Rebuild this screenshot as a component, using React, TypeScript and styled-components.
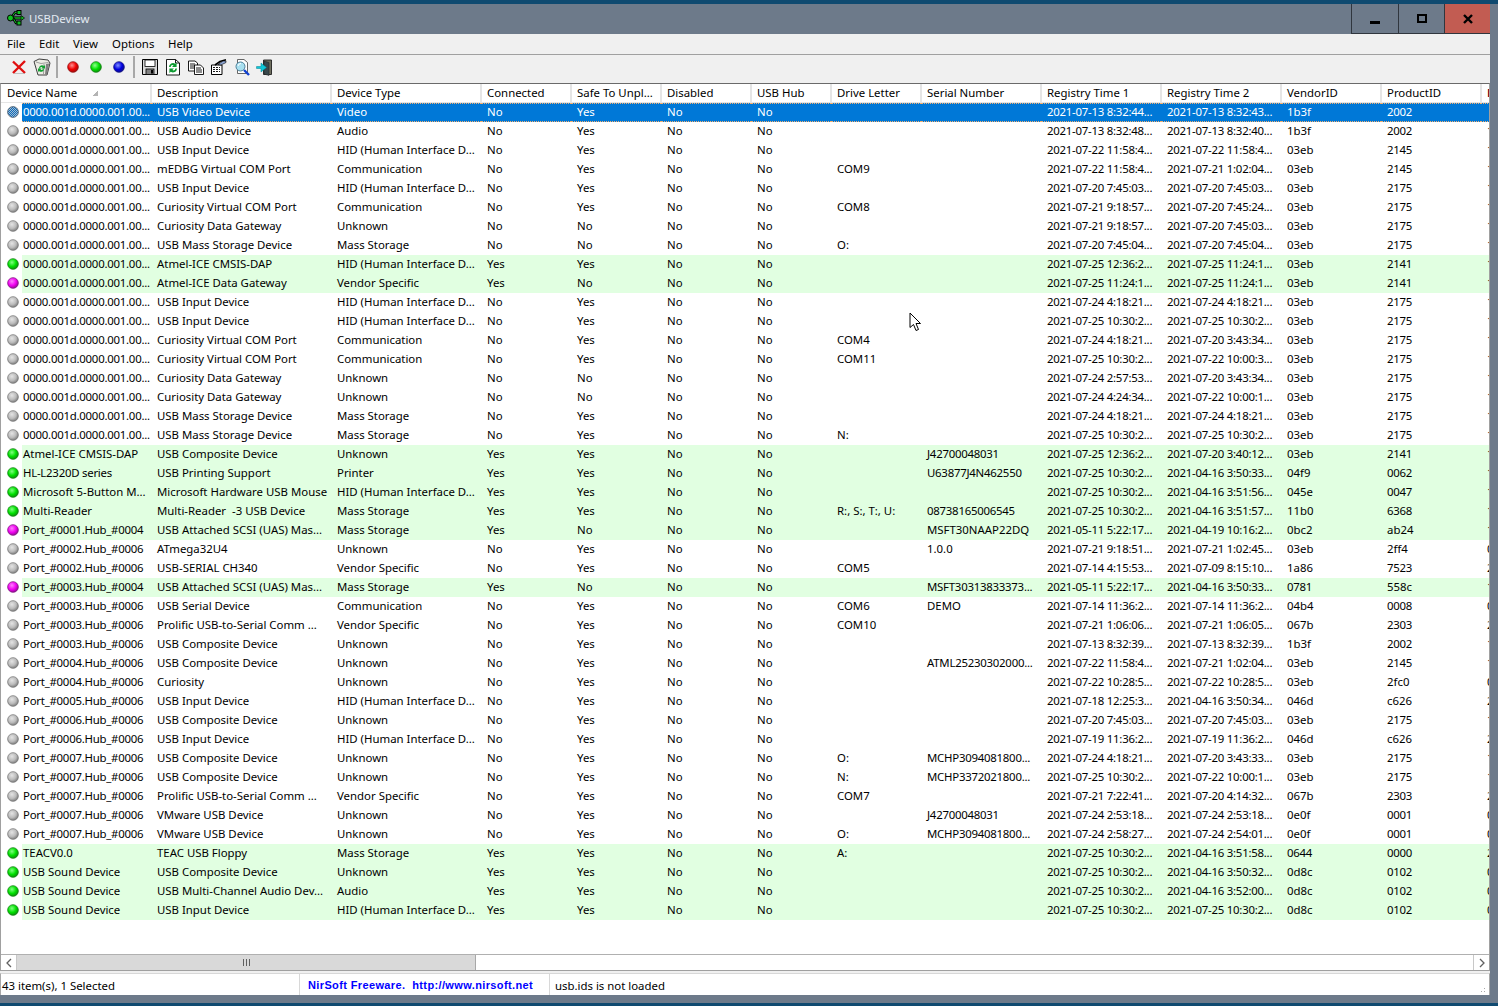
import React from "react";
import styled, { createGlobalStyle } from "styled-components";

const FONT = `"Noto Sans", "Open Sans", Tahoma, sans-serif`;
const COLS = "150px 180px 150px 90px 90px 90px 80px 90px 120px 120px 120px 100px 100px 9px";

const Global = createGlobalStyle`
  html, body { margin: 0; padding: 0; height: 100%; overflow: hidden; background: #0f4a70; }
  * { box-sizing: border-box; }
  #root { width: 1498px; height: 1006px; }
`;

const Desktop = styled.div`
  width: 1498px; height: 1006px; display: flex; flex-direction: column; position: relative;
  font-family: ${FONT}; font-size: 11.4px; color: #000; background: #0f4a70;
`;
const TopStrip = styled.div`height: 4px; flex: none; background: #0f4a70;`;
const BottomStrip = styled.div`height: 3px; flex: none; background: #0f4a70;`;
const Frame = styled.div`
  flex: 1; min-height: 0; display: flex; flex-direction: column; background: #6d7a8a;
`;
const TitleBar = styled.div`
  height: 30px; flex: none; display: flex; align-items: center; padding-left: 7px; color: #e4ebf3;
`;
const TitleLabel = styled.div`flex: 1; display: flex; align-items: center; margin-bottom: 2px;`;
const TitleText = styled.span`margin-left: 4px;`;
const TitleEdge = styled.div`width: 8px; flex: none;`;
const WinButton = styled.div<{ $w: number; $close?: boolean }>`
  width: ${p => p.$w}px; height: 30px; display: flex; align-items: center; justify-content: center;
  border-left: 1px solid #30363e; border-bottom: 1px solid #30363e;
  background: ${p => (p.$close ? "#c25c52" : "#6d7a8a")};
`;
const Client = styled.div`
  width: 1490px; flex: 1; min-height: 0; display: flex; flex-direction: column; background: #f0f0f0;
`;
const MenuBar = styled.div`
  height: 21px; flex: none; display: flex; align-items: center; padding-left: 7px;
  border-bottom: 1px solid #a0a0a0; background: #f0f0f0;
`;
const MenuItem = styled.span<{ $w: number }>`width: ${p => p.$w}px; line-height: 20px;`;
const Toolbar = styled.div`
  height: 28px; flex: none; display: flex; align-items: center; background: #f0f0f0;
  padding: 0 0 4px 7px;
`;
const ToolButton = styled.div`width: 23px; height: 24px; display: flex; align-items: center; justify-content: center;`;
const ToolSep = styled.div`
  width: 8px; height: 22px; display: flex; justify-content: center;
  &::before { content: ""; width: 2px; height: 100%; background: #a8a8a8; }
`;
const ListView = styled.div`
  flex: none; height: 887px; display: flex; flex-direction: column; background: #fff;
  border-top: 1px solid #6a6a6a; border-left: 1px solid #a0a0a0; border-right: 1px solid #a0a0a0; overflow: hidden;
`;
const HeaderRow = styled.div`
  height: 19px; flex: none; display: grid; grid-template-columns: ${COLS}; background: #fff;
  border-bottom: 1px solid #e5e5e5;
`;
const HeaderCell = styled.div`
  position: relative; padding-left: 6px; line-height: 18px; white-space: nowrap; overflow: hidden;
  margin-right: -1px; border-right: 2px solid #e5e5e5; color: #000;
`;
const LastHeaderCell = styled(HeaderCell)`color: #700020; font-weight: 700;`;
const SortMark = styled.span`
  position: absolute; left: 91px; top: 6px; width: 6px; height: 6px;
  background: linear-gradient(135deg, transparent 50%, #b4b4b4 50%);
`;
const Rows = styled.div`flex: none; display: flex; flex-direction: column;`;
const Row = styled.div`height: 19px; flex: none; display: grid; grid-template-columns: ${COLS}; position: relative;`;
const IconSlot = styled.span`
  position: absolute; left: 6px; top: 3px; width: 12px; height: 12px; display: flex;
`;
const Cell = styled.div<{ $state: string; $first?: boolean; $tight?: boolean }>`
  line-height: 18px; height: 19px; overflow: hidden;
  padding-left: ${p => (p.$first ? "1px" : "6px")};
  margin-left: ${p => (p.$first ? "21px" : "0")};
  white-space: pre;
  letter-spacing: ${p => (p.$tight ? "-0.24px" : "0")};
  color: ${p => (p.$state === "s" ? "#fff" : "#000")};
  background: ${p => (p.$state === "s" ? "#0078d7" : p.$state === "g" ? "#e1ffe1" : "#fff")};
  ${p => p.$state === "s" && `border-top: 1px dotted #f5b070; border-bottom: 1px dotted #f5b070; line-height: 16px;`}
`;
const ScrollBar = styled.div`
  margin-top: auto; height: 16px; flex: none; display: flex; border-top: 1px solid #b0b0b0; background: #fff;
`;
const ScrollButton = styled.div`
  width: 16px; flex: none; display: flex; align-items: center; justify-content: center; background: #fff;
  border-right: 1px solid #c8c8c8;
`;
const ScrollButtonEnd = styled(ScrollButton)`border-right: none; border-left: 1px solid #c8c8c8;`;
const ScrollThumb = styled.div`
  width: 459px; flex: none; background: #d9d9d9; border-right: 1px solid #a8a8a8; display: flex; align-items: center; justify-content: center;
`;
const ScrollTrack = styled.div`flex: 1;`;
const Grip = styled.span`width: 7px; height: 7px; background: repeating-linear-gradient(90deg, #606060 0 1px, transparent 1px 3px);`;
const StatusGap = styled.div`height: 3px; flex: none; background: #f0f0f0; border-top: 1px solid #a0a0a0;`;
const StatusBar = styled.div`
  height: 22px; flex: none; display: flex; align-items: center; background: #fff; position: relative;
  border-left: 1px solid #a8a8a8; border-top: 1px solid #d8d8d8; border-right: 1px solid #a8a8a8;
`;
const StatusPanel = styled.div<{ $w?: number }>`
  ${p => (p.$w ? `width: ${p.$w}px; flex: none;` : "flex: 1;")}
  height: 100%; display: flex; align-items: center; padding: 1px 0 0 1px; border-right: 1px solid #d8d8d8;
`;
const LinkPanel = styled(StatusPanel)`
  padding-left: 8px; color: #0000ff; font-family: "Liberation Sans", Arial, sans-serif; font-weight: 700; font-size: 11px; white-space: pre;
  letter-spacing: 0.37px;
`;
const TextPanel = styled(StatusPanel)`padding-left: 5px; border-right: none;`;
const SizeGrip = styled.span`
  position: absolute; right: 2px; bottom: 1px; width: 10px; height: 10px;
  background: radial-gradient(circle, #a8a8a8 0 1px, transparent 1px) 0 0 / 3px 3px;
  clip-path: polygon(100% 0, 100% 100%, 0 100%);
`;
const FrameBottom = styled.div`flex: 1;`;
const Cursor = styled.svg`position: absolute; left: 909px; top: 312px;`;

const N = "0000.001d.0000.001.00...";
const HID = "HID (Human Interface D...";
const DATA = `s|${N}|USB Video Device|Video|No|Yes|No|No|||2021-07-13 8:32:44...|2021-07-13 8:32:43...|1b3f|2002|
x|${N}|USB Audio Device|Audio|No|Yes|No|No|||2021-07-13 8:32:48...|2021-07-13 8:32:40...|1b3f|2002|1
x|${N}|USB Input Device|${HID}|No|Yes|No|No|||2021-07-22 11:58:4...|2021-07-22 11:58:4...|03eb|2145|1
x|${N}|mEDBG Virtual COM Port|Communication|No|Yes|No|No|COM9||2021-07-22 11:58:4...|2021-07-21 1:02:04...|03eb|2145|1
x|${N}|USB Input Device|${HID}|No|Yes|No|No|||2021-07-20 7:45:03...|2021-07-20 7:45:03...|03eb|2175|1
x|${N}|Curiosity Virtual COM Port|Communication|No|Yes|No|No|COM8||2021-07-21 9:18:57...|2021-07-20 7:45:24...|03eb|2175|1
x|${N}|Curiosity Data Gateway|Unknown|No|No|No|No|||2021-07-21 9:18:57...|2021-07-20 7:45:03...|03eb|2175|1
x|${N}|USB Mass Storage Device|Mass Storage|No|No|No|No|O:||2021-07-20 7:45:04...|2021-07-20 7:45:04...|03eb|2175|1
g|${N}|Atmel-ICE CMSIS-DAP|${HID}|Yes|Yes|No|No|||2021-07-25 12:36:2...|2021-07-25 11:24:1...|03eb|2141|1
m|${N}|Atmel-ICE Data Gateway|Vendor Specific|Yes|No|No|No|||2021-07-25 11:24:1...|2021-07-25 11:24:1...|03eb|2141|1
x|${N}|USB Input Device|${HID}|No|Yes|No|No|||2021-07-24 4:18:21...|2021-07-24 4:18:21...|03eb|2175|1
x|${N}|USB Input Device|${HID}|No|Yes|No|No|||2021-07-25 10:30:2...|2021-07-25 10:30:2...|03eb|2175|1
x|${N}|Curiosity Virtual COM Port|Communication|No|Yes|No|No|COM4||2021-07-24 4:18:21...|2021-07-20 3:43:34...|03eb|2175|1
x|${N}|Curiosity Virtual COM Port|Communication|No|Yes|No|No|COM11||2021-07-25 10:30:2...|2021-07-22 10:00:3...|03eb|2175|1
x|${N}|Curiosity Data Gateway|Unknown|No|No|No|No|||2021-07-24 2:57:53...|2021-07-20 3:43:34...|03eb|2175|1
x|${N}|Curiosity Data Gateway|Unknown|No|No|No|No|||2021-07-24 4:24:34...|2021-07-22 10:00:1...|03eb|2175|1
x|${N}|USB Mass Storage Device|Mass Storage|No|Yes|No|No|||2021-07-24 4:18:21...|2021-07-24 4:18:21...|03eb|2175|1
x|${N}|USB Mass Storage Device|Mass Storage|No|Yes|No|No|N:||2021-07-25 10:30:2...|2021-07-25 10:30:2...|03eb|2175|1
g|Atmel-ICE CMSIS-DAP|USB Composite Device|Unknown|Yes|Yes|No|No||J42700048031|2021-07-25 12:36:2...|2021-07-20 3:40:12...|03eb|2141|1
g|HL-L2320D series|USB Printing Support|Printer|Yes|Yes|No|No||U63877J4N462550|2021-07-25 10:30:2...|2021-04-16 3:50:33...|04f9|0062|1
g|Microsoft 5-Button M...|Microsoft Hardware USB Mouse|${HID}|Yes|Yes|No|No|||2021-07-25 10:30:2...|2021-04-16 3:51:56...|045e|0047|1
g|Multi-Reader|Multi-Reader  -3 USB Device|Mass Storage|Yes|Yes|No|No|R:, S:, T:, U:|08738165006545|2021-07-25 10:30:2...|2021-04-16 3:51:57...|11b0|6368|1
m|Port_#0001.Hub_#0004|USB Attached SCSI (UAS) Mas...|Mass Storage|Yes|No|No|No||MSFT30NAAP22DQ|2021-05-11 5:22:17...|2021-04-19 10:16:2...|0bc2|ab24|1
x|Port_#0002.Hub_#0006|ATmega32U4|Unknown|No|Yes|No|No||1.0.0|2021-07-21 9:18:51...|2021-07-21 1:02:45...|03eb|2ff4|0
x|Port_#0002.Hub_#0006|USB-SERIAL CH340|Vendor Specific|No|Yes|No|No|COM5||2021-07-14 4:15:53...|2021-07-09 8:15:10...|1a86|7523|2
m|Port_#0003.Hub_#0004|USB Attached SCSI (UAS) Mas...|Mass Storage|Yes|No|No|No||MSFT30313833373...|2021-05-11 5:22:17...|2021-04-16 3:50:33...|0781|558c|1
x|Port_#0003.Hub_#0006|USB Serial Device|Communication|No|Yes|No|No|COM6|DEMO|2021-07-14 11:36:2...|2021-07-14 11:36:2...|04b4|0008|0
x|Port_#0003.Hub_#0006|Prolific USB-to-Serial Comm ...|Vendor Specific|No|Yes|No|No|COM10||2021-07-21 1:06:06...|2021-07-21 1:06:05...|067b|2303|2
x|Port_#0003.Hub_#0006|USB Composite Device|Unknown|No|Yes|No|No|||2021-07-13 8:32:39...|2021-07-13 8:32:39...|1b3f|2002|1
x|Port_#0004.Hub_#0006|USB Composite Device|Unknown|No|Yes|No|No||ATML25230302000...|2021-07-22 11:58:4...|2021-07-21 1:02:04...|03eb|2145|1
x|Port_#0004.Hub_#0006|Curiosity|Unknown|No|Yes|No|No|||2021-07-22 10:28:5...|2021-07-22 10:28:5...|03eb|2fc0|0
x|Port_#0005.Hub_#0006|USB Input Device|${HID}|No|Yes|No|No|||2021-07-18 12:25:3...|2021-04-16 3:50:34...|046d|c626|2
x|Port_#0006.Hub_#0006|USB Composite Device|Unknown|No|Yes|No|No|||2021-07-20 7:45:03...|2021-07-20 7:45:03...|03eb|2175|1
x|Port_#0006.Hub_#0006|USB Input Device|${HID}|No|Yes|No|No|||2021-07-19 11:36:2...|2021-07-19 11:36:2...|046d|c626|2
x|Port_#0007.Hub_#0006|USB Composite Device|Unknown|No|Yes|No|No|O:|MCHP3094081800...|2021-07-24 4:18:21...|2021-07-20 3:43:33...|03eb|2175|1
x|Port_#0007.Hub_#0006|USB Composite Device|Unknown|No|Yes|No|No|N:|MCHP3372021800...|2021-07-25 10:30:2...|2021-07-22 10:00:1...|03eb|2175|1
x|Port_#0007.Hub_#0006|Prolific USB-to-Serial Comm ...|Vendor Specific|No|Yes|No|No|COM7||2021-07-21 7:22:41...|2021-07-20 4:14:32...|067b|2303|2
x|Port_#0007.Hub_#0006|VMware USB Device|Unknown|No|Yes|No|No||J42700048031|2021-07-24 2:53:18...|2021-07-24 2:53:18...|0e0f|0001|0
x|Port_#0007.Hub_#0006|VMware USB Device|Unknown|No|Yes|No|No|O:|MCHP3094081800...|2021-07-24 2:58:27...|2021-07-24 2:54:01...|0e0f|0001|0
g|TEACV0.0|TEAC USB Floppy|Mass Storage|Yes|Yes|No|No|A:||2021-07-25 10:30:2...|2021-04-16 3:51:58...|0644|0000|2
g|USB Sound Device|USB Composite Device|Unknown|Yes|Yes|No|No|||2021-07-25 10:30:2...|2021-04-16 3:50:32...|0d8c|0102|0
g|USB Sound Device|USB Multi-Channel Audio Dev...|Audio|Yes|Yes|No|No|||2021-07-25 10:30:2...|2021-04-16 3:52:00...|0d8c|0102|0
g|USB Sound Device|USB Input Device|${HID}|Yes|Yes|No|No|||2021-07-25 10:30:2...|2021-07-25 10:30:2...|0d8c|0102|0`
  .split("\n")
  .map(l => l.split("|"));

const HEADERS = ["Device Name", "Description", "Device Type", "Connected", "Safe To Unpl...", "Disabled", "USB Hub", "Drive Letter", "Serial Number", "Registry Time 1", "Registry Time 2", "VendorID", "ProductID"];

const Ball: React.FC<{ hi: string; mid: string; lo: string; size?: number; id: string }> = ({ hi, mid, lo, size = 12, id }) => (
  <svg width={size} height={size} viewBox="0 0 13 13">
    <defs>
      <radialGradient id={id} cx="0.4" cy="0.35" r="0.7">
        <stop offset="0" stopColor={hi} />
        <stop offset="0.55" stopColor={mid} />
        <stop offset="1" stopColor={lo} />
      </radialGradient>
    </defs>
    <circle cx="6.5" cy="6.5" r="5.8" fill={`url(#${id})`} stroke={lo} strokeWidth="0.8" />
  </svg>
);

const DitherBall = () => (
  <svg width="12" height="12" viewBox="0 0 12 12">
    <defs>
      <pattern id="dither" width="2" height="2" patternUnits="userSpaceOnUse">
        <rect width="2" height="2" fill="#a9bccd" />
        <rect width="1" height="1" fill="#0a6cc0" />
        <rect x="1" y="1" width="1" height="1" fill="#0a6cc0" />
      </pattern>
    </defs>
    <circle cx="6" cy="6" r="5.4" fill="url(#dither)" stroke="#4a5a6a" strokeWidth="0.8" />
  </svg>
);

const StatusBall: React.FC<{ state: string; i: number }> = ({ state, i }) => {
  if (state === "g") return <Ball id={`b${i}`} hi="#80ff80" mid="#00e000" lo="#108010" />;
  if (state === "m") return <Ball id={`b${i}`} hi="#ff80ff" mid="#f000f0" lo="#801080" />;
  if (state === "s") return <DitherBall />;
  return <Ball id={`b${i}`} hi="#e4e4e4" mid="#bcbcbc" lo="#747474" />;
};

const UsbLogo = () => (
  <svg width="18" height="18" viewBox="0 0 18 18">
    <path d="M1.5 9H16" stroke="#000" strokeWidth="3.2" />
    <path d="M1.5 9H16" stroke="#10c020" strokeWidth="1.4" />
    <path d="M4 9L8 3.5H11M6 9L9 14H11" fill="none" stroke="#000" strokeWidth="2.6" />
    <path d="M4 9L8 3.5H11M6 9L9 14H11" fill="none" stroke="#10c020" strokeWidth="1" />
    <circle cx="3.5" cy="9" r="3" fill="#10c020" stroke="#000" />
    <rect x="10" y="1.5" width="4" height="4" fill="#10c020" stroke="#000" />
    <rect x="10" y="12" width="4" height="4" fill="#10c020" stroke="#000" />
    <path d="M14 6.5L17.5 9L14 11.5Z" fill="#10c020" stroke="#000" strokeWidth="0.7" />
  </svg>
);
const IconX = () => (
  <svg width="16" height="16" viewBox="0 0 16 16">
    <path d="M2 2.5L14 14M14 2L2 14" stroke="#e01010" strokeWidth="2.4" fill="none" />
    <path d="M3 14.5L14 14.5" stroke="#a0a0a0" strokeWidth="0.6" />
  </svg>
);
const IconTrash = () => (
  <svg width="18" height="18" viewBox="0 0 18 18">
    <path d="M1 3.5L6 1L15 2L17 5L14 17H5L1 3.5Z" fill="#ecece4" stroke="#404040" strokeWidth="1" />
    <path d="M3 4L8 5.5L15.5 4.5M11 6L10.5 16" stroke="#8a8a8a" strokeWidth="0.8" fill="none" />
    <path d="M13 6L12 16.5H14L16.2 5.5Z" fill="#808080" />
    <path d="M6 10a3 3 0 0 1 5-2l1-1v3.5H8.5l1-1a1.7 1.7 0 0 0-2.5 1zM11 11.5a3 3 0 0 1-5 1.5l-1 1v-3.5h3.5l-1 1a1.7 1.7 0 0 0 2.5-.5z" fill="#10a030" />
  </svg>
);
const IconSave = () => (
  <svg width="16" height="16" viewBox="0 0 16 16">
    <path d="M.5.5H15.5V15.5H.5Z" fill="#d8d8d8" stroke="#000" />
    <rect x="3" y="1" width="10" height="6.5" fill="#fff" stroke="#000" strokeWidth="0.8" />
    <rect x="4" y="10" width="8" height="5.5" fill="#808080" stroke="#000" strokeWidth="0.8" />
    <rect x="9" y="11" width="2" height="3.5" fill="#000" />
  </svg>
);
const IconRefresh = () => (
  <svg width="16" height="18" viewBox="0 0 16 18">
    <path d="M1.5 1.5H10.5L14.5 5V17H1.5Z" fill="#fff" stroke="#000" strokeWidth="0.9" />
    <path d="M10.5 1.5V5H14.5" fill="none" stroke="#000" strokeWidth="0.9" />
    <path d="M4 9a4 4 0 0 1 6.2-3.2L11.6 4.4V9H7l1.6-1.6A2.2 2.2 0 0 0 5.6 9Z" fill="#0c9a30" />
    <path d="M12 10.5a4 4 0 0 1-6.2 3.2L4.4 15.1V10.5H9l-1.6 1.6a2.2 2.2 0 0 0 3-1.6Z" fill="#0c9a30" />
  </svg>
);
const IconCopy = () => (
  <svg width="16" height="15" viewBox="0 0 16 15">
    <path d="M.5 1H7L9.5 3V11H.5Z" fill="#fff" stroke="#000" strokeWidth="0.9" />
    <path d="M2 4H7M2 6H8M2 8H8" stroke="#000" strokeWidth="0.9" />
    <path d="M6.5 5H12.5L15.5 8V14.5H6.5Z" fill="#fff" stroke="#000" strokeWidth="0.9" />
    <path d="M8 8H13M8 10H14M8 12H14" stroke="#000" strokeWidth="0.9" />
  </svg>
);
const IconProps = () => (
  <svg width="16" height="16" viewBox="0 0 16 16">
    <path d="M.5 6H11V15.5H.5Z" fill="#fff" stroke="#000" />
    <path d="M2 8.5H9M2 10.5H9M2 12.5H9" stroke="#000" strokeWidth="0.9" strokeDasharray="2 1" />
    <path d="M4 6L9 2.5L15 .8" fill="none" stroke="#000" strokeWidth="1.6" />
    <path d="M7 5.5L12 2H15V3.5L10 6Z" fill="#8fa8d8" stroke="#000" strokeWidth="0.6" />
  </svg>
);
const IconSearch = () => (
  <svg width="16" height="17" viewBox="0 0 16 17">
    <path d="M3.5 .5H10L13.5 3.5V14.5H3.5Z" fill="#fff" stroke="#555" strokeWidth="0.9" />
    <path d="M10 11L15 16" stroke="#1040d0" strokeWidth="2.4" />
    <circle cx="6.5" cy="7.5" r="4.5" fill="#a8e0f0" stroke="#508098" />
    <path d="M4 7a3 3 0 0 1 3-2.5" stroke="#fff" fill="none" />
  </svg>
);
const IconExit = () => (
  <svg width="17" height="17" viewBox="0 0 17 17">
    <path d="M7.5 1H15.5V15.5H7.5Z" fill="#707060" stroke="#202020" strokeWidth="0.9" />
    <path d="M8 2L13 3.5V16.5L8 15Z" fill="#38484c" stroke="#202020" strokeWidth="0.5" />
    <path d="M.5 7.5H5V4L10.5 8.5L5 13V9.5H.5Z" fill="#10c8d8" stroke="#008090" strokeWidth="0.5" />
  </svg>
);

const App: React.FC = () => (
  <Desktop>
    <Global />
    <TopStrip />
    <Frame>
      <TitleBar>
        <TitleLabel>
          <UsbLogo />
          <TitleText>USBDeview</TitleText>
        </TitleLabel>
        <WinButton $w={47}>
          <svg width="12" height="12" viewBox="0 0 12 12"><rect x="1" y="8" width="10" height="3" fill="#000" /></svg>
        </WinButton>
        <WinButton $w={46}>
          <svg width="12" height="12" viewBox="0 0 12 12"><rect x="2" y="2" width="8" height="7" fill="none" stroke="#000" strokeWidth="2" /></svg>
        </WinButton>
        <WinButton $w={46} $close>
          <svg width="12" height="12" viewBox="0 0 12 12"><path d="M2 2L10 10M10 2L2 10" stroke="#000" strokeWidth="2.4" /></svg>
        </WinButton>
        <TitleEdge />
      </TitleBar>
      <Client>
        <MenuBar>
          <MenuItem $w={32}>File</MenuItem>
          <MenuItem $w={34}>Edit</MenuItem>
          <MenuItem $w={39}>View</MenuItem>
          <MenuItem $w={56}>Options</MenuItem>
          <MenuItem $w={32}>Help</MenuItem>
        </MenuBar>
        <Toolbar>
          <ToolButton><IconX /></ToolButton>
          <ToolButton><IconTrash /></ToolButton>
          <ToolSep />
          <ToolButton><Ball id="tr" hi="#ff9090" mid="#f00000" lo="#901010" /></ToolButton>
          <ToolButton><Ball id="tg" hi="#90ff90" mid="#00e000" lo="#108010" /></ToolButton>
          <ToolButton><Ball id="tb" hi="#8090ff" mid="#0000e0" lo="#101080" /></ToolButton>
          <ToolSep />
          <ToolButton><IconSave /></ToolButton>
          <ToolButton><IconRefresh /></ToolButton>
          <ToolButton><IconCopy /></ToolButton>
          <ToolButton><IconProps /></ToolButton>
          <ToolButton><IconSearch /></ToolButton>
          <ToolButton><IconExit /></ToolButton>
        </Toolbar>
        <ListView>
          <HeaderRow>
            {HEADERS.map((h, i) => (
              <HeaderCell key={h}>{h}{i === 0 && <SortMark />}</HeaderCell>
            ))}
            <LastHeaderCell>F</LastHeaderCell>
          </HeaderRow>
          <Rows>
            {DATA.map((r, i) => {
              const st = r[0];
              const bg = st === "g" || st === "m" ? "g" : st === "s" ? "s" : "w";
              return (
                <Row key={i}>
                  <IconSlot><StatusBall state={st} i={i} /></IconSlot>
                  {r.slice(1).map((c, j) => (
                    <Cell key={j} $state={bg} $first={j === 0} $tight={/\d{4}/.test(c)}>{c}</Cell>
                  ))}
                </Row>
              );
            })}
          </Rows>
          <ScrollBar>
            <ScrollButton>
              <svg width="8" height="10" viewBox="0 0 8 10"><path d="M6 1L2 5L6 9" fill="none" stroke="#606060" strokeWidth="1.3" /></svg>
            </ScrollButton>
            <ScrollThumb><Grip /></ScrollThumb>
            <ScrollTrack />
            <ScrollButtonEnd>
              <svg width="8" height="10" viewBox="0 0 8 10"><path d="M2 1L6 5L2 9" fill="none" stroke="#606060" strokeWidth="1.3" /></svg>
            </ScrollButtonEnd>
          </ScrollBar>
        </ListView>
        <StatusGap />
        <StatusBar>
          <StatusPanel $w={299}>43 item(s), 1 Selected</StatusPanel>
          <LinkPanel $w={250}>{"NirSoft Freeware.  http://www.nirsoft.net"}</LinkPanel>
          <TextPanel>usb.ids is not loaded</TextPanel>
          <SizeGrip />
        </StatusBar>
      </Client>
      <FrameBottom />
    </Frame>
    <BottomStrip />
    <Cursor width="14" height="20" viewBox="0 0 14 20">
      <path d="M1 1V15.5L4.5 12.5L7 18.5L9.5 17.5L7 11.5H11.5Z" fill="#fff" stroke="#000" strokeWidth="1" />
    </Cursor>
  </Desktop>
);

export default App;
